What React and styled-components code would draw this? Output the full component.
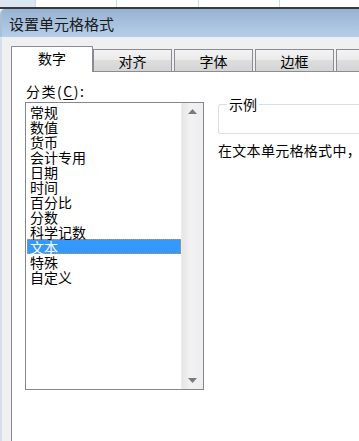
import styled, { createGlobalStyle } from 'styled-components'

const GlobalStyle = createGlobalStyle`
  html, body {
    margin: 0;
    padding: 0;
    background: #f0f0f0;
    overflow: hidden;
  }
  body {
    font-family: "Noto Sans CJK SC", "Liberation Sans", sans-serif;
    color: #000;
  }
`

const Screen = styled.div`
  width: 359px;
  height: 441px;
  display: flex;
  flex-direction: column;
  overflow: hidden;
`

const SheetStrip = styled.div`
  height: 7px;
  display: flex;
  background: #fff;
  border-bottom: 2px solid #3a3a3a;
`

const SheetCell = styled.div`
  width: ${p => p.w}px;
  flex-shrink: 0;
  background: ${p => (p.active ? '#dce6f1' : '#fff')};
  border-right: 1px solid #d0d7e5;
`

const TitleBar = styled.div`
  height: 28px;
  display: flex;
  align-items: center;
  padding-left: 7px;
  background: linear-gradient(#97b3d2, #b6cee8);
  border-left: 2px solid #a9bfd8;
  border-top-left-radius: 5px;
  font-size: 15px;
  color: #1a1a1a;
`

const Body = styled.div`
  flex: 1;
  display: flex;
  flex-direction: column;
  padding: 8px 0 0 9px;
  border-left: 2px solid #d4dfeb;
  border-top: 1px solid #e8eef5;
`

const TabRow = styled.div`
  display: flex;
  align-items: flex-end;
  height: 25px;
  gap: 2px;
  position: relative;
  z-index: 1;
`

const Tab = styled.div`
  box-sizing: border-box;
  flex-shrink: 0;
  display: flex;
  align-items: center;
  justify-content: center;
  font-size: 14px;
  line-height: 15px;
  border: 1px solid #898c95;
  border-bottom: none;
  ${p =>
    p.selected
      ? `
    width: 82px;
    height: 26px;
    margin-bottom: -1px;
    margin-right: -2px;
    background: #fff;
    padding-bottom: 2px;
  `
      : `
    width: 79px;
    height: 22px;
    background: linear-gradient(#f3f3f3 0%, #ebebeb 45%, #dddddd 50%, #d5d5d5 100%);
    padding-top: 1px;
  `}
`

const Panel = styled.div`
  flex: 1;
  display: flex;
  gap: 14px;
  background: #fff;
  border-top: 1px solid #898c95;
  border-left: 1px solid #898c95;
  padding: 12px 0 0 13px;
`

const LeftColumn = styled.div`
  display: flex;
  flex-direction: column;
`

const Label = styled.div`
  font-size: 14px;
  line-height: 15px;
  height: 18px;
  padding-left: 1px;
  letter-spacing: 1.5px;

  u {
    text-underline-offset: 2px;
  }
`

const ListBox = styled.div`
  box-sizing: border-box;
  width: 179px;
  height: 288px;
  display: flex;
  border: 1px solid #828790;
  background: #fff;
`

const Items = styled.div`
  flex: 1;
  padding: 1px 0 0 1px;
`

const Item = styled.div`
  box-sizing: border-box;
  height: 15px;
  font-size: 14px;
  line-height: 14px;
  padding-left: 2px;
  color: ${p => (p.selected ? '#fff' : '#000')};
  background: ${p => (p.selected ? '#3399ff' : 'transparent')};
  border: 1px dotted ${p => (p.selected ? '#e38d2c' : 'transparent')};
`

const ScrollBar = styled.div`
  width: 21px;
  display: flex;
  flex-direction: column;
  justify-content: space-between;
  background: linear-gradient(to right, #e6e6e6, #f2f2f2 40%, #ededed);
  border-left: 1px solid #ececec;
`

const ArrowButton = styled.div`
  height: 17px;
  display: flex;
  align-items: center;
  justify-content: center;
`

const RightColumn = styled.div`
  flex: 1;
  display: flex;
  flex-direction: column;
  padding-top: 13px;
`

const SampleGroup = styled.fieldset`
  margin: 0;
  height: 37px;
  box-sizing: border-box;
  padding: 0;
  border: 1px solid #d5dfe5;
  border-right: none;
  border-radius: 3px 0 0 3px;
`

const Legend = styled.legend`
  margin-left: 8px;
  padding: 0 2px;
  font-size: 14px;
  line-height: 15px;
`

const Hint = styled.div`
  margin-top: 9px;
  font-size: 14px;
  line-height: 15px;
  white-space: nowrap;
  letter-spacing: 0.3px;
`

const categories = [
  '常规',
  '数值',
  '货币',
  '会计专用',
  '日期',
  '时间',
  '百分比',
  '分数',
  '科学记数',
  '文本',
  '特殊',
  '自定义',
]

// the fifth tab runs off the right edge; its label is not in view
const tabs = ['数字', '对齐', '字体', '边框', '']

function Arrow({ down }) {
  return (
    <svg width="9" height="5" viewBox="0 0 9 5">
      <polygon
        points={down ? '0,0 9,0 4.5,5' : '4.5,0 9,5 0,5'}
        fill="#7a7a7a"
      />
    </svg>
  )
}

export default function App() {
  return (
    <Screen>
      <GlobalStyle />
      <SheetStrip>
        <SheetCell w={35} active />
        <SheetCell w={80} />
        <SheetCell w={81} />
        <SheetCell w={80} />
        <SheetCell w={79} />
      </SheetStrip>
      <TitleBar>设置单元格格式</TitleBar>
      <Body>
        <TabRow>
          {tabs.map((t, i) => (
            <Tab key={i} selected={i === 0}>
              {t}
            </Tab>
          ))}
        </TabRow>
        <Panel>
          <LeftColumn>
            <Label>
              分类(<u>C</u>):
            </Label>
            <ListBox>
              <Items>
                {categories.map(c => (
                  <Item key={c} selected={c === '文本'}>
                    {c}
                  </Item>
                ))}
              </Items>
              <ScrollBar>
                <ArrowButton>
                  <Arrow />
                </ArrowButton>
                <ArrowButton>
                  <Arrow down />
                </ArrowButton>
              </ScrollBar>
            </ListBox>
          </LeftColumn>
          <RightColumn>
            <SampleGroup>
              <Legend>示例</Legend>
            </SampleGroup>
            <Hint>在文本单元格格式中，</Hint>
          </RightColumn>
        </Panel>
      </Body>
    </Screen>
  )
}
